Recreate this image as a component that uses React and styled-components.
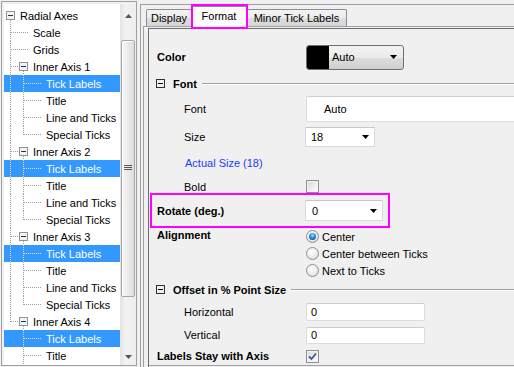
import React from 'react';
import styled, { createGlobalStyle } from 'styled-components';

const GlobalStyle = createGlobalStyle`
  html, body { margin: 0; padding: 0; background: #f0f0f0; }
  body { font-family: "Liberation Sans", Arial, sans-serif; font-size: 11px; color: #000; }
  #root { width: 514px; height: 367px; overflow: hidden; }
  * { box-sizing: border-box; }
`;

const Window = styled.div`
  display: flex;
  width: 514px;
  height: 367px;
  overflow: hidden;
  background: #f0f0f0;
`;

/* ---------- Tree ---------- */
const TreeFrame = styled.div`
  flex: none;
  margin: 1px 0 0 1px;
  width: 136px;
  height: 365px;
  border: 1px solid #a0a0a0;
  padding: 2px 0 0 2px;
  display: flex;
  background: #f0f0f0;
`;

const TreeList = styled.div`
  flex: 1;
  background: #fff;
  padding-top: 3px;
  overflow: hidden;
`;

const TreeRow = styled.div`
  display: flex;
  align-items: center;
  height: 17px;
  background: ${p => (p.$selected ? '#3399ff' : 'transparent')};
  color: ${p => (p.$selected ? '#fff' : '#000')};
  white-space: nowrap;
`;

const GuideSvg = styled.svg`
  flex: none;
  display: block;
`;

const TreeText = styled.span`
  margin-left: 3px;
`;

const ScrollBar = styled.div`
  flex: none;
  width: 16px;
  display: flex;
  flex-direction: column;
  background: linear-gradient(to right, #e4e4e4, #f2f2f2 35%, #eeeeee);
`;

const ScrollBtn = styled.div`
  flex: none;
  height: ${p => p.$h}px;
  display: flex;
  align-items: center;
  justify-content: center;
`;

const Thumb = styled.div`
  flex: none;
  margin: 13px 1px 0;
  height: 257px;
  border: 1px solid #a6a6a6;
  border-radius: 2px;
  background: linear-gradient(to right, #f7f7f7, #ececec 45%, #dcdcdc);
  box-shadow: inset 1px 1px 0 #fff;
  display: flex;
  align-items: center;
  justify-content: center;
`;

const Spacer = styled.div`
  flex: 1;
`;

/* ---------- Right side ---------- */
const RightPanel = styled.div`
  flex: 1;
  min-width: 0;
  margin: 4px 0 0 3px;
  border-left: 1px solid #a0a0a0;
  border-top: 1px solid #a0a0a0;
  padding: 0 0 0 2px;
  display: flex;
  flex-direction: column;
`;

const TabStrip = styled.div`
  flex: none;
  height: 21px;
  display: flex;
  align-items: flex-end;
  padding-left: 3px;
`;

const Tab = styled.div`
  position: relative;
  z-index: ${p => (p.$active ? 2 : 1)};
  flex: none;
  width: ${p => p.$w}px;
  height: ${p => (p.$active ? 21 : 17)}px;
  margin-bottom: ${p => (p.$active ? -1 : 0)}px;
  margin-left: ${p => (p.$first ? 0 : -1)}px;
  border: 1px solid #898c95;
  border-bottom: none;
  border-radius: 2px 2px 0 0;
  background: ${p =>
    p.$active ? '#fbfbfb' : 'linear-gradient(#f3f3f3, #ebebeb 50%, #dedede 51%, #d5d5d5)'};
  display: flex;
  align-items: center;
  justify-content: center;
  white-space: nowrap;
  padding-bottom: ${p => (p.$active ? 2 : 0)}px;

  ${p =>
    p.$marked &&
    `&::after {
      content: '';
      position: absolute;
      left: -1px;
      right: -2px;
      top: -3px;
      bottom: -2px;
      border: 2px solid #ff00ff;
    }`}
`;

const TabPage = styled.div`
  flex: 1;
  border-top: 1px solid #a0a0a0;
  border-left: 1px solid #a0a0a0;
  padding: 1px 0 0 4px;
  display: flex;
  flex-direction: column;
  background: #f0f0f0;
`;

const PropGrid = styled.div`
  flex: 1;
  border-top: 1px solid #6d6d6d;
  border-left: 1px solid #6d6d6d;
  padding-top: 12px;
  display: flex;
  flex-direction: column;
  overflow: hidden;
`;

const Row = styled.div`
  flex: none;
  display: grid;
  grid-template-columns: ${p => p.$col || 156}px 1fr;
  align-items: ${p => p.$align || 'center'};
  height: ${p => p.$h}px;
  border-bottom: ${p => (p.$line ? '1px solid #a0a0a0' : 'none')};
`;

const HighlightRow = styled(Row)`
  margin-left: 1px;
  width: 240px;
  border: 2px solid #ff00ff;
`;

const Label = styled.div`
  padding-left: ${p => (p.$pad != null ? p.$pad : 8)}px;
  font-weight: ${p => (p.$bold ? 700 : 400)};
  color: ${p => (p.$link ? '#1a3dff' : '#000')};
  line-height: ${p => (p.$lh ? `${p.$lh}px` : 'normal')};
  white-space: nowrap;
`;

const Value = styled.div`
  display: flex;
  align-items: center;
  min-width: 0;
`;

const GroupHeader = styled.div`
  flex: none;
  display: flex;
  align-items: center;
  height: ${p => p.$h}px;
  padding-left: 7px;
`;

const CollapseBox = styled.span`
  flex: none;
  width: 9px;
  height: 9px;
  border: 1px solid #303030;
  display: flex;
  align-items: center;
  justify-content: center;
  margin-top: -1px;

  &::after {
    content: '';
    width: 5px;
    height: 1px;
    background: #000;
  }
`;

const GroupTitle = styled.span`
  margin-left: 8px;
  font-weight: 700;
  white-space: nowrap;
`;

const GroupLine = styled.span`
  flex: 1;
  margin-left: 5px;
  height: 2px;
  border-top: 1px solid #a0a0a0;
  border-bottom: 1px solid #fff;
`;

const ColorSelect = styled.div`
  margin-left: 1px;
  width: 98px;
  height: 25px;
  border: 1px solid #707070;
  border-radius: 3px;
  background: linear-gradient(#f2f2f2, #ebebeb 50%, #dddddd 51%, #cfcfcf);
  display: flex;
  align-items: stretch;
  padding: 0 6px 0 0;
`;

const Swatch = styled.span`
  flex: none;
  width: 22px;
  background: #000;
  border-radius: 2px 0 0 2px;
`;

const SelectText = styled.span`
  flex: 1;
  display: flex;
  align-items: center;
  padding-left: ${p => p.$pl || 3}px;
`;

const ArrowBox = styled.span`
  display: flex;
  align-items: center;
`;

const Combo = styled.div`
  margin-left: ${p => p.$ml || 0}px;
  width: ${p => p.$w}px;
  height: ${p => p.$h}px;
  background: #fff;
  border: 1px solid #dadada;
  border-top-color: #c8c8c8;
  display: flex;
  align-items: center;
  padding: 0 5px 0 ${p => p.$pl}px;
`;

const TextBox = styled.div`
  flex: none;
  margin-left: 1px;
  width: ${p => p.$w}px;
  height: ${p => p.$h}px;
  background: #fff;
  border: 1px solid #dcdcdc;
  border-top-color: #cdcdcd;
  border-radius: 2px;
  display: flex;
  align-items: center;
  padding-left: ${p => p.$pl}px;
  white-space: nowrap;
`;

const CheckBox = styled.span`
  flex: none;
  margin-left: 1px;
  width: 13px;
  height: 13px;
  border: 1px solid #8e8f8f;
  background: linear-gradient(135deg, #d8d8d8, #f4f4f4 70%, #fff);
  box-shadow: inset 0 0 0 1px #f4f4f4;
  display: flex;
  align-items: center;
  justify-content: center;
`;

const RadioList = styled.div`
  display: flex;
  flex-direction: column;
  margin-left: 1px;
`;

const RadioOption = styled.div`
  display: flex;
  align-items: center;
  gap: 3px;
  height: 17px;
  white-space: nowrap;
`;

const RadioDot = styled.span`
  flex: none;
  width: 13px;
  height: 13px;
  border-radius: 50%;
  border: 1px solid #8e8f8f;
  background: radial-gradient(circle at 40% 35%, #ffffff 0, #ebebeb 55%, #cfcfcf 100%);
  display: flex;
  align-items: center;
  justify-content: center;

  &::after {
    content: '';
    display: ${p => (p.$on ? 'block' : 'none')};
    width: 7px;
    height: 7px;
    border-radius: 50%;
    background: radial-gradient(circle at 50% 35%, #9fe0ff 0, #2a8ad8 45%, #0c3f78 100%);
  }
`;

/* ---------- drawings ---------- */
const DownArrow = ({ color = '#000', w = 7, h = 4 }) => (
  <svg width={w} height={h} viewBox={`0 0 ${w} ${h}`}>
    <polygon points={`0,0 ${w},0 ${w / 2},${h}`} fill={color} />
  </svg>
);

const UpArrow = ({ color = '#555', w = 7, h = 4 }) => (
  <svg width={w} height={h} viewBox={`0 0 ${w} ${h}`}>
    <polygon points={`0,${h} ${w},${h} ${w / 2},0`} fill={color} />
  </svg>
);

const Grip = () => (
  <svg width="8" height="8" viewBox="0 0 8 8">
    {[0.5, 2.5, 4.5, 6.5].map(y => (
      <line key={y} x1="0" y1={y} x2="8" y2={y} stroke={y === 6.5 ? '#e8e8e8' : '#555'} strokeWidth="1" />
    ))}
  </svg>
);

const CheckMark = () => (
  <svg width="9" height="9" viewBox="0 0 9 9">
    <path d="M1 4.5 L3.5 7 L8 1.5" fill="none" stroke="#3d5a9e" strokeWidth="1.8" />
  </svg>
);

function Guide({ type, sel }) {
  const c = sel ? '#ffd9a8' : '#a0a0a0';
  const lp = { stroke: c, strokeWidth: 1, strokeDasharray: '1 1' };
  return (
    <GuideSvg width="13" height="17" viewBox="0 0 13 17">
      {(type === 'pipe' || type === 'tee') && <line x1="6.5" y1="0" x2="6.5" y2="17" {...lp} />}
      {type === 'elbow' && <line x1="6.5" y1="0" x2="6.5" y2="9" {...lp} />}
      {(type === 'tee' || type === 'elbow') && <line x1="7" y1="8.5" x2="13" y2="8.5" {...lp} />}
      {type === 'leaf' && <line x1="0" y1="8.5" x2="11" y2="8.5" {...lp} />}
      {(type === 'exp' || type === 'root') && (
        <>
          {type === 'exp' && <line x1="0" y1="8.5" x2="2" y2="8.5" {...lp} />}
          <line x1="6.5" y1="13" x2="6.5" y2="17" {...lp} />
          <rect x="2.5" y="4.5" width="8" height="8" fill="#f3f3f3" stroke="#939393" />
          <line x1="4" y1="8.5" x2="9" y2="8.5" stroke="#1f3560" strokeWidth="1" />
        </>
      )}
    </GuideSvg>
  );
}

const axisGroup = (n, last) => [
  { label: `Inner Axis ${n}`, g: [last ? 'elbow' : 'tee', 'exp'] },
  { label: 'Tick Labels', g: [last ? 'blank' : 'pipe', 'tee', 'leaf'], sel: true },
  { label: 'Title', g: [last ? 'blank' : 'pipe', 'tee', 'leaf'] },
  { label: 'Line and Ticks', g: [last ? 'blank' : 'pipe', 'tee', 'leaf'] },
  { label: 'Special Ticks', g: [last ? 'blank' : 'pipe', 'elbow', 'leaf'] },
];

const treeRows = [
  { label: 'Radial Axes', g: ['root'] },
  { label: 'Scale', g: ['tee', 'leaf'] },
  { label: 'Grids', g: ['tee', 'leaf'] },
  ...axisGroup(1),
  ...axisGroup(2),
  ...axisGroup(3),
  ...axisGroup(4, true).slice(0, 3),
];

export default function App() {
  return (
    <>
      <GlobalStyle />
      <Window>
        <TreeFrame>
          <TreeList>
            {treeRows.map((r, i) => (
              <TreeRow key={i} $selected={r.sel}>
                {r.g.map((t, j) => (
                  <Guide key={j} type={t} sel={r.sel} />
                ))}
                <TreeText>{r.label}</TreeText>
              </TreeRow>
            ))}
          </TreeList>
          <ScrollBar>
            <ScrollBtn $h={23}>
              <UpArrow />
            </ScrollBtn>
            <Thumb>
              <Grip />
            </Thumb>
            <Spacer />
            <ScrollBtn $h={17}>
              <DownArrow color="#555" />
            </ScrollBtn>
          </ScrollBar>
        </TreeFrame>

        <RightPanel>
          <TabStrip>
            <Tab $w={46} $first>Display</Tab>
            <Tab $w={56} $active $marked>Format</Tab>
            <Tab $w={101}>Minor Tick Labels</Tab>
          </TabStrip>
          <TabPage>
            <PropGrid>
              <Row $h={32}>
                <Label $bold>Color</Label>
                <Value>
                  <ColorSelect>
                    <Swatch />
                    <SelectText>Auto</SelectText>
                    <ArrowBox>
                      <DownArrow />
                    </ArrowBox>
                  </ColorSelect>
                </Value>
              </Row>

              <GroupHeader $h={22}>
                <CollapseBox />
                <GroupTitle>Font</GroupTitle>
                <GroupLine />
              </GroupHeader>

              <Row $h={27}>
                <Label $pad={35}>Font</Label>
                <Value>
                  <TextBox $w={214} $h={26} $pl={17}>Auto</TextBox>
                </Value>
              </Row>

              <Row $h={30}>
                <Label $pad={35}>Size</Label>
                <Value>
                  <Combo $w={70} $h={20} $pl={2}>
                    <SelectText $pl={0}>18</SelectText>
                    <DownArrow />
                  </Combo>
                </Value>
              </Row>

              <Row $h={21}>
                <Label $pad={36} $link>Actual Size (18)</Label>
              </Row>

              <Row $h={20} $align="end">
                <Label $pad={35}>Bold</Label>
                <Value>
                  <CheckBox />
                </Value>
              </Row>

              <HighlightRow $h={35} $col={153}>
                <Label $bold $pad={5}>Rotate (deg.)</Label>
                <Value>
                  <Combo $w={78} $h={21} $pl={3}>
                    <SelectText $pl={0}>0</SelectText>
                    <DownArrow />
                  </Combo>
                </Value>
              </HighlightRow>

              <Row $h={51} $align="start">
                <Label $bold $lh={15}>Alignment</Label>
                <RadioList>
                  <RadioOption>
                    <RadioDot $on />
                    Center
                  </RadioOption>
                  <RadioOption>
                    <RadioDot />
                    Center between Ticks
                  </RadioOption>
                  <RadioOption>
                    <RadioDot />
                    Next to Ticks
                  </RadioOption>
                </RadioList>
              </Row>

              <GroupHeader $h={22}>
                <CollapseBox />
                <GroupTitle>Offset in % Point Size</GroupTitle>
                <GroupLine />
              </GroupHeader>

              <Row $h={22}>
                <Label $pad={35}>Horizontal</Label>
                <Value>
                  <TextBox $w={119} $h={18} $pl={4}>0</TextBox>
                </Value>
              </Row>

              <Row $h={24}>
                <Label $pad={35}>Vertical</Label>
                <Value>
                  <TextBox $w={119} $h={17} $pl={4}>0</TextBox>
                </Value>
              </Row>

              <Row $h={19} $line>
                <Label $bold>Labels Stay with Axis</Label>
                <Value>
                  <CheckBox>
                    <CheckMark />
                  </CheckBox>
                </Value>
              </Row>
            </PropGrid>
          </TabPage>
        </RightPanel>
      </Window>
    </>
  );
}
